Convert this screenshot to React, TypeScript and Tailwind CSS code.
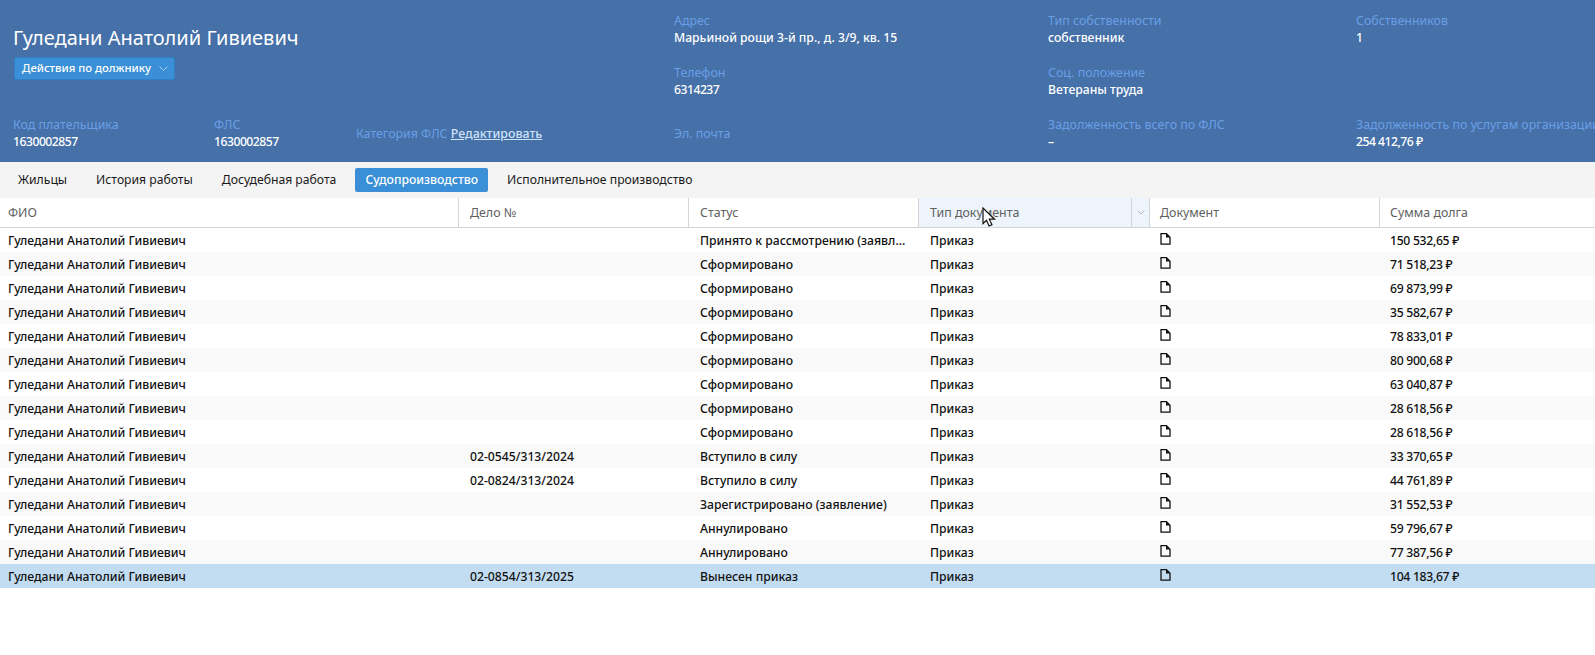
const rows: [string, string, string][] = [
  ["", "Принято к рассмотрению (заявл...", "150 532,65 ₽"],
  ["", "Сформировано", "71 518,23 ₽"],
  ["", "Сформировано", "69 873,99 ₽"],
  ["", "Сформировано", "35 582,67 ₽"],
  ["", "Сформировано", "78 833,01 ₽"],
  ["", "Сформировано", "80 900,68 ₽"],
  ["", "Сформировано", "63 040,87 ₽"],
  ["", "Сформировано", "28 618,56 ₽"],
  ["", "Сформировано", "28 618,56 ₽"],
  ["02-0545/313/2024", "Вступило в силу", "33 370,65 ₽"],
  ["02-0824/313/2024", "Вступило в силу", "44 761,89 ₽"],
  ["", "Зарегистрировано (заявление)", "31 552,53 ₽"],
  ["", "Аннулировано", "59 796,67 ₽"],
  ["", "Аннулировано", "77 387,56 ₽"],
  ["02-0854/313/2025", "Вынесен приказ", "104 183,67 ₽"],
];

const tabs = ["Жильцы", "История работы", "Досудебная работа", "Судопроизводство", "Исполнительное производство"];

function Field({ label, value, numeric }: { label: string; value?: string; numeric?: boolean }) {
  return (
    <div className="whitespace-nowrap">
      <p className="text-[12.4px] leading-[17px] text-[#6a9fe6]">{label}</p>
      {value ? (
        <p className={`text-[12.2px] leading-[17px] font-medium text-white ${numeric ? "tracking-[-0.5px]" : ""}`}>
          {value}
        </p>
      ) : null}
    </div>
  );
}

function DocIcon() {
  return (
    <svg className="mb-[4px] block" width="11" height="12" viewBox="0 0 11 12" fill="none" stroke="#111" strokeWidth="1.3">
      <path d="M1 .7h5.500L10 4.200v7H1z" />
      <path d="M6 .7v3.700h4z" fill="#111" stroke="none" />
    </svg>
  );
}

function HeadCell({ children, className }: { children: string; className: string }) {
  return (
    <div className={`flex items-center border-r border-[#d4d4d4] pt-px text-[12.4px] text-[#5f5f5f] ${className}`}>
      {children}
    </div>
  );
}

export default function App() {
  return (
    <div className="relative h-[655px] w-[1595px] overflow-hidden bg-white font-['Noto_Sans',sans-serif]">
      <header className="grid h-[162px] grid-cols-[661px_374px_308px_1fr] grid-rows-[52px_52px_1fr] bg-[#4570a8] pl-[13px] pt-[12px]">
        <div className="row-span-2">
          <h1 className="mt-[13px] text-[20px] leading-[26px] font-normal text-white">Гуледани Анатолий Гивиевич</h1>
          <button className="mt-[6px] ml-px flex h-[23px] w-[161px] items-center gap-[8px] rounded-[2px] border border-[#2f80c6] bg-[#3a8fd6] pl-[7px] text-[11.3px] font-medium text-white">
            Действия по должнику
            <svg width="9" height="5" viewBox="0 0 9 5" fill="none" stroke="#a9cdee">
              <path d="M.5.5l4 4 4-4" />
            </svg>
          </button>
        </div>
        <Field label="Адрес" value="Марьиной рощи 3-й пр., д. 3/9, кв. 15" />
        <Field label="Тип собственности" value="собственник" />
        <Field label="Собственников" value="1" />
        <Field label="Телефон" value="6314237" numeric />
        <Field label="Соц. положение" value="Ветераны труда" />
        <div />
        <div className="flex items-start">
          <div className="w-[201px]">
            <Field label="Код плательщика" value="1630002857" numeric />
          </div>
          <div className="w-[142px]">
            <Field label="ФЛС" value="1630002857" numeric />
          </div>
          <p className="mt-[9px] text-[12.4px] leading-[17px] whitespace-nowrap text-[#6a9fe6]">
            Категория ФЛС <span className="font-medium text-[#cfe2f7] underline">Редактировать</span>
          </p>
        </div>
        <div className="pt-[9px]">
          <Field label="Эл. почта" />
        </div>
        <Field label="Задолженность всего по ФЛС" value="–" />
        <Field label="Задолженность по услугам организации" value="254 412,76 ₽" numeric />
      </header>

      <nav className="flex h-[36px] items-center gap-[9px] bg-[#f4f4f4] pl-[8px]">
        {tabs.map((tab) => (
          <span
            key={tab}
            className={
              tab === "Судопроизводство"
                ? "flex h-[24px] items-center rounded-[2px] bg-[#3a8fd6] px-[10px] text-[12.2px] font-medium text-white"
                : "flex h-[24px] items-center px-[10px] text-[12.2px] text-[#1a1a1a]"
            }
          >
            {tab}
          </span>
        ))}
      </nav>

      <div className="flex h-[30px] border-b-[1.5px] border-[#d4d4d4]">
        <HeadCell className="w-[459px] pl-2">ФИО</HeadCell>
        <HeadCell className="w-[230px] pl-[11px]">Дело №</HeadCell>
        <HeadCell className="w-[230px] pl-[11px]">Статус</HeadCell>
        <div className="flex w-[231px] border-r border-[#d4d4d4] bg-[#edf4fb] text-[12.4px] text-[#5f5f5f]">
          <div className="flex flex-1 items-center border-r border-[#d4d4d4] pt-px pl-[11px]">Тип документа</div>
          <div className="flex w-[17px] items-center justify-center">
            <svg width="8" height="5" viewBox="0 0 8 5" fill="none" stroke="#b8b8b8">
              <path d="M.5.5L4 4 7.500.5" />
            </svg>
          </div>
        </div>
        <HeadCell className="w-[230px] pl-[10px]">Документ</HeadCell>
        <div className="flex flex-1 items-center pt-px pl-[10px] text-[12.4px] text-[#5f5f5f]">Сумма долга</div>
      </div>

      {rows.map(([caseNo, status, sum], i) => (
        <div
          key={i}
          className={`flex h-[24px] items-center pt-[2px] text-[12.2px] font-medium text-[#111] ${
            i === 14 ? "bg-[#c2dcf2]" : i % 2 === 1 ? "bg-[#f9f9f9]" : "bg-white"
          }`}
        >
          <div className="w-[459px] pl-2">Гуледани Анатолий Гивиевич</div>
          <div className="w-[230px] pl-[11px]">{caseNo}</div>
          <div className="w-[230px] pl-[11px]">{status}</div>
          <div className="w-[231px] pl-[11px]">Приказ</div>
          <div className="w-[230px] pl-[10px]">
            <DocIcon />
          </div>
          <div className="pl-[10px] tracking-[-0.3px]">{sum}</div>
        </div>
      ))}

      <svg className="absolute left-[982px] top-[207px]" width="14" height="21" viewBox="0 0 14 21">
        <path d="M1 1v15.500l3.500-3.300 2.600 5.800 2.800-1.200-2.600-5.600H12.500z" fill="#fff" stroke="#111" strokeWidth="1.2" />
      </svg>
    </div>
  );
}
